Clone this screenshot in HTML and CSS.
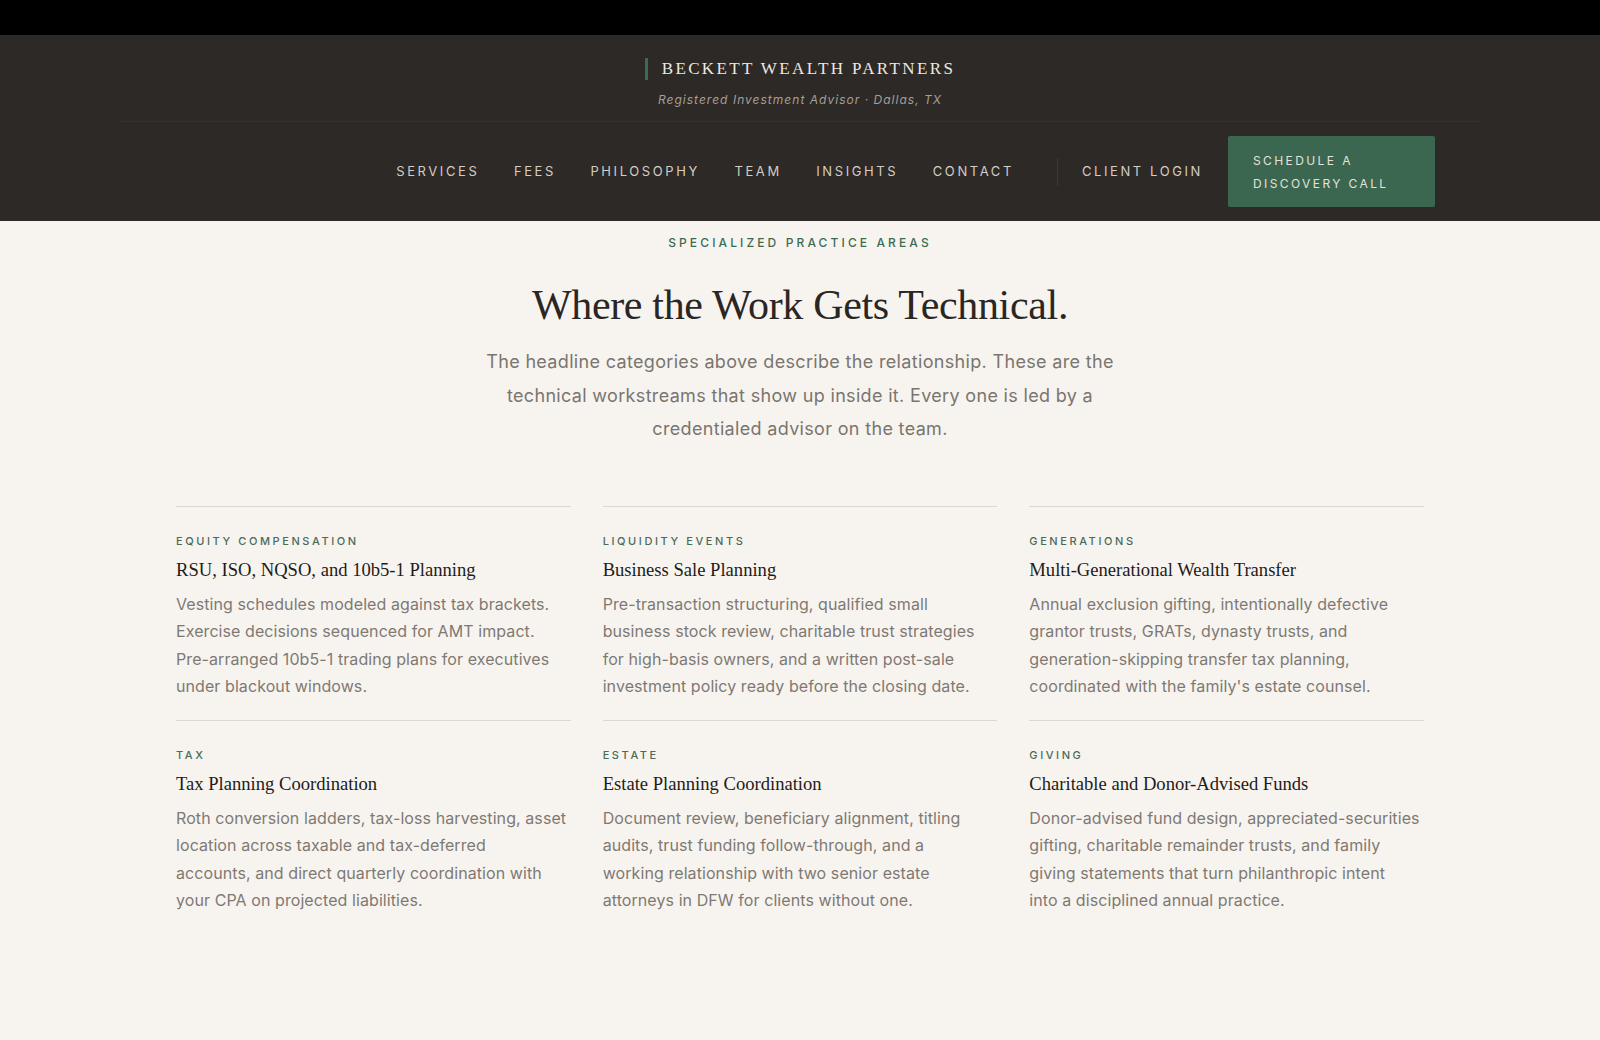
FILE: index.html
```html
<!DOCTYPE html>
<html lang="en">
<head>
<meta charset="utf-8">
<title>Beckett Wealth Partners — Specialized Practice Areas</title>
<link rel="stylesheet" href="styles.css">
</head>
<body>
<div class="topbar"></div>
<header class="site-header">
  <div class="header-inner">
    <div class="brand">
      <div class="brand-name"><span class="brand-bar"></span><span class="brand-text">BECKETT WEALTH PARTNERS</span></div>
      <div class="brand-sub">Registered Investment Advisor · Dallas, TX</div>
    </div>
    <nav class="nav">
      <ul class="nav-links">
        <li><a href="#">SERVICES</a></li>
        <li><a href="#">FEES</a></li>
        <li><a href="#">PHILOSOPHY</a></li>
        <li><a href="#">TEAM</a></li>
        <li><a href="#">INSIGHTS</a></li>
        <li><a href="#">CONTACT</a></li>
      </ul>
      <span class="nav-sep"></span>
      <a class="nav-login" href="#">CLIENT LOGIN</a>
      <a class="nav-cta" href="#">SCHEDULE A DISCOVERY CALL</a>
    </nav>
  </div>
</header>
<main class="practice">
  <div class="eyebrow">SPECIALIZED PRACTICE AREAS</div>
  <h1 class="headline">Where the Work Gets Technical.</h1>
  <p class="lede">The headline categories above describe the relationship. These are the technical workstreams that show up inside it. Every one is led by a credentialed advisor on the team.</p>
  <div class="grid">
    <article class="card">
      <div class="card-label">EQUITY COMPENSATION</div>
      <h3 class="card-title">RSU, ISO, NQSO, and 10b5-1 Planning</h3>
      <p class="card-body">Vesting schedules modeled against tax brackets.<br>Exercise decisions sequenced for AMT impact.<br>Pre-arranged 10b5-1 trading plans for executives<br>under blackout windows.</p>
    </article>
    <article class="card">
      <div class="card-label">LIQUIDITY EVENTS</div>
      <h3 class="card-title">Business Sale Planning</h3>
      <p class="card-body">Pre-transaction structuring, qualified small<br>business stock review, charitable trust strategies<br>for high-basis owners, and a written post-sale<br>investment policy ready before the closing date.</p>
    </article>
    <article class="card">
      <div class="card-label">GENERATIONS</div>
      <h3 class="card-title">Multi-Generational Wealth Transfer</h3>
      <p class="card-body">Annual exclusion gifting, intentionally defective<br>grantor trusts, GRATs, dynasty trusts, and<br>generation-skipping transfer tax planning,<br>coordinated with the family's estate counsel.</p>
    </article>
    <article class="card">
      <div class="card-label">TAX</div>
      <h3 class="card-title">Tax Planning Coordination</h3>
      <p class="card-body">Roth conversion ladders, tax-loss harvesting, asset<br>location across taxable and tax-deferred<br>accounts, and direct quarterly coordination with<br>your CPA on projected liabilities.</p>
    </article>
    <article class="card">
      <div class="card-label">ESTATE</div>
      <h3 class="card-title">Estate Planning Coordination</h3>
      <p class="card-body">Document review, beneficiary alignment, titling<br>audits, trust funding follow-through, and a<br>working relationship with two senior estate<br>attorneys in DFW for clients without one.</p>
    </article>
    <article class="card">
      <div class="card-label">GIVING</div>
      <h3 class="card-title">Charitable and Donor-Advised Funds</h3>
      <p class="card-body">Donor-advised fund design, appreciated-securities<br>gifting, charitable remainder trusts, and family<br>giving statements that turn philanthropic intent<br>into a disciplined annual practice.</p>
    </article>
  </div>
</main>
</body>
</html>
```
FILE: styles.css
```css
* { box-sizing: border-box; }
html, body { margin: 0; padding: 0; }
body {
  background: #f7f4f0;
  font-family: "Inter", "Liberation Sans", sans-serif;
  color: #2a2623;
  min-height: 1040px;
}
a { text-decoration: none; color: inherit; }
ul { list-style: none; margin: 0; padding: 0; }

.topbar { height: 35px; background: #000; }

.site-header { background: #2d2926; }
.header-inner { max-width: 1360px; margin: 0 auto; }

.brand {
  display: flex; flex-direction: column; align-items: center;
  padding: 22px 0 13px;
  border-bottom: 1px solid #36322f;
}
.brand-name { display: flex; align-items: center; height: 24px; }
.brand-bar { width: 3px; height: 22px; background: #3d6b52; margin-right: 14px; }
.brand-text {
  font-family: "Liberation Serif", serif;
  font-size: 17px; letter-spacing: 0.14em; color: #ede8e0;
}
.brand-sub {
  margin-top: 11px;
  font-size: 12px; line-height: 16px; font-style: italic;
  letter-spacing: 0.085em; color: #a59f97;
}

.nav {
  display: flex; align-items: center; justify-content: flex-end;
  padding: 14px 45px 14px 0;
}
.nav-links { display: flex; gap: 34.5px; }
.nav-links a, .nav-login {
  font-size: 13px; line-height: 16px; letter-spacing: 0.2em; color: #d3cdc4;
}
.nav-links a { display: block; margin-top: -1px; }
.nav-login { margin-top: -1px; }
.nav-sep { width: 1px; height: 28px; background: #3d3935; margin: 0 24px 0 43px; }
.nav-login { margin-right: 25px; }
.nav-cta {
  display: block; width: 207px; height: 71px;
  padding: 13px 25px 0;
  background: #3b6650; border-radius: 2px;
  font-size: 12px; line-height: 23px; letter-spacing: 0.2em; color: #e6e2da;
}

.practice { padding: 14px 0 80px; text-align: center; }
.eyebrow {
  font-size: 12px; line-height: 16px; letter-spacing: 0.26em; color: #3d6b52; font-weight: 500;
}
.headline {
  margin: 28px 0 0;
  font-family: "Liberation Serif", serif; font-weight: 400;
  font-size: 42px; line-height: 52px; color: #2a2623; letter-spacing: -0.33px;
}
.lede {
  max-width: 660px; margin: 14px auto 0;
  font-size: 18px; line-height: 33.5px; color: #7a756f; letter-spacing: 0.33px;
}

.grid {
  width: 1248px; margin: 60px auto 0;
  display: grid; grid-template-columns: repeat(3, 1fr); column-gap: 32px;
  text-align: left;
}
.card { border-top: 1px solid #dcd7d0; padding: 26px 0 19px; }
.card-label {
  font-size: 11px; line-height: 16px; letter-spacing: 0.235em; color: #4a6b58; font-weight: 500;
}
.card-title {
  margin: 8px 0 0;
  font-family: "Liberation Serif", serif; font-weight: 400;
  font-size: 18.6px; line-height: 26px; color: #1f1b18;
}
.card-body {
  margin: 8px 0 0;
  font-size: 16px; line-height: 27.5px; color: #7f7973; letter-spacing: 0.08px;
}
```
